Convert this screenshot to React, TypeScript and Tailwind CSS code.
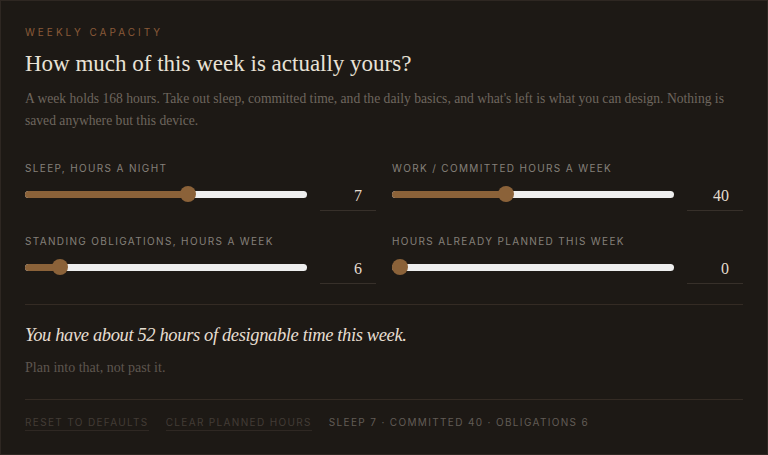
import React from "react";

const serif = { fontFamily: '"Liberation Serif", "DejaVu Serif", serif' } as React.CSSProperties;
const sans = { fontFamily: "Inter, sans-serif" } as React.CSSProperties;

type S = { label: string; value: number; max: number };

function Slider({ s }: { s: S }) {
  const frac = s.value / s.max;
  return (
    <div>
      <div className="text-[10px] leading-4 tracking-[0.135em] text-[#85807a] uppercase" style={sans}>
        {s.label}
      </div>
      <div className="mt-[5px] flex items-end gap-[13px]">
        <div className="relative mb-[9px] h-4 flex-1">
          <div className="absolute inset-x-0 top-[4.5px] h-[7px] rounded-full bg-[#eeeeee]" />
          <div
            className="absolute left-0 top-[4.5px] h-[7px] rounded-full bg-[#8b6239]"
            style={{ width: `calc(8px + ${frac} * (100% - 16px))` }}
          />
          <div
            className="absolute top-0 h-4 w-4 rounded-full bg-[#8b6239]"
            style={{ left: `calc(${frac} * (100% - 16px))` }}
          />
        </div>
        <div className="flex h-[30px] w-[56px] items-center justify-end border-b border-[#37302a] pr-[14px] text-[16px] text-[#e4dccf]" style={serif}>
          {s.value}
        </div>
      </div>
    </div>
  );
}

export default function App() {
  const sliders: S[] = [
    { label: "Sleep, hours a night", value: 7, max: 12 },
    { label: "Work / committed hours a week", value: 40, max: 100 },
    { label: "Standing obligations, hours a week", value: 6, max: 60 },
    { label: "Hours already planned this week", value: 0, max: 80 },
  ];
  return (
    <div className="min-h-screen border border-[#2e2722] bg-[#1d1915] px-[24px] pt-[23px]">
      <div className="text-[10px] leading-4 tracking-[0.3em] text-[#8a5a38]" style={sans}>
        WEEKLY CAPACITY
      </div>
      <h1 className="mt-2 text-[23px] leading-8 text-[#e9e2d6]" style={serif}>
        How much of this week is actually yours?
      </h1>
      <p className="mt-2 text-[13.6px] leading-[22px] text-[#6e665e]" style={serif}>
        A week holds 168 hours. Take out sleep, committed time, and the daily basics, and what's left is what you can design. Nothing is saved anywhere but this device.
      </p>
      <div className="mt-[28px] grid grid-cols-2 gap-x-4 gap-y-[22px]">
        {sliders.map((s) => (
          <Slider key={s.label} s={s} />
        ))}
      </div>
      <div className="mt-5 border-t border-[#342b24]" />
      <div className="mt-4 text-[18.5px] italic leading-7 tracking-[-0.02em] text-[#e6ddd0]" style={serif}>
        You have about 52 hours of designable time this week.
      </div>
      <div className="mt-[9px] text-[14px] leading-5 text-[#5e564f]" style={serif}>
        Plan into that, not past it.
      </div>
      <div className="mt-[21px] border-t border-[#342b24]" />
      <div className="mt-[14px] flex items-start gap-[17px] text-[10px] leading-4 tracking-[0.135em]" style={sans}>
        <span className="border-b border-[#2f2823] text-[#433c36]">RESET TO DEFAULTS</span>
        <span className="border-b border-[#2f2823] text-[#433c36]">CLEAR PLANNED HOURS</span>
        <span className="text-[#625c56]">SLEEP 7 · COMMITTED 40 · OBLIGATIONS 6</span>
      </div>
    </div>
  );
}
